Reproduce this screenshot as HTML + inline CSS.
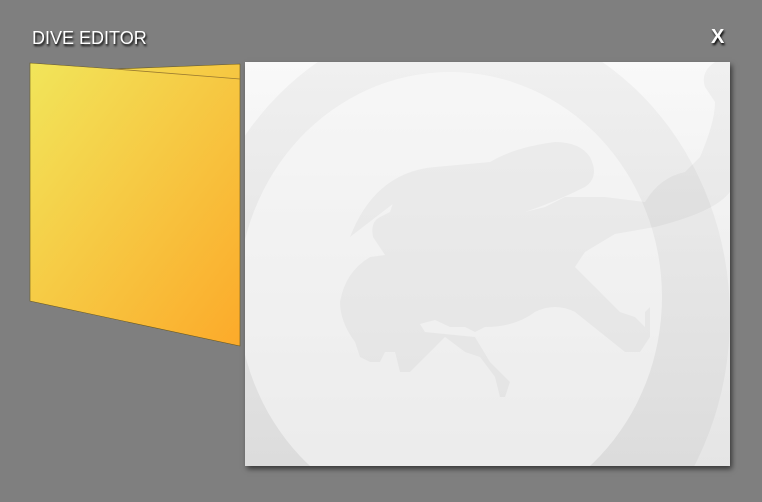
<!DOCTYPE html>
<html><head><style>
html,body{margin:0;padding:0;width:762px;height:502px;overflow:hidden;}
body{background:#7f7f7f;position:relative;font-family:"Liberation Sans",sans-serif;}
.t{position:absolute;left:32px;top:28px;color:#fff;font-size:18px;text-shadow:1px 2px 2px #000;}
.x{position:absolute;left:711px;top:26px;color:#fff;font-size:20px;font-weight:bold;text-shadow:1px 2px 2px #000;}
.p{position:absolute;left:245px;top:62px;width:485px;height:404px;box-shadow:2px 3px 5px rgba(0,0,0,.55);overflow:hidden;background:linear-gradient(#f9f9f9,#e5e5e5);}
svg{display:block}
</style></head><body>
<div class="t">DIVE EDITOR</div>
<div class="x">X</div>
<svg style="position:absolute;left:0;top:0" width="762" height="502">
<defs><linearGradient id="g" x1="0" y1="0" x2="1" y2="1"><stop offset="0" stop-color="#f1e55a"/><stop offset="1" stop-color="#fcaa2a"/></linearGradient></defs>
<polygon points="30,63 115,69 240,64 240,346 30,301" fill="url(#g)" stroke="#6a5a20" stroke-width="0.6"/>
<line x1="115" y1="69" x2="240" y2="79" stroke="#9a7a30" stroke-width="0.8"/>
</svg>
<div class="p">
<svg width="485" height="404" style="position:absolute;left:0;top:0">
<ellipse cx="215" cy="255" rx="270" ry="300" fill="#000" opacity="0.035"/>
<ellipse cx="205" cy="235" rx="212" ry="225" fill="#fff" opacity="0.45"/>
<path d="M105 175 Q130 110 190 105 L245 100 Q270 85 310 80 Q335 80 345 95 Q355 115 340 125 Q310 140 280 150 L300 145 L320 135 L360 135 L400 140 Q415 115 440 110 L455 95 Q470 60 470 40 L460 25 Q455 10 470 0 L485 0 L485 130 Q470 150 410 165 L370 172 L340 190 L330 205 L375 250 L390 255 L400 265 L400 250 L405 245 L405 275 L395 290 L380 290 L330 250 Q310 240 290 250 Q270 265 240 265 L230 270 L220 265 L205 265 L190 258 L175 262 L180 270 L230 275 L245 300 L265 320 L260 335 L255 335 L250 315 L235 295 L220 290 L200 275 L185 290 L165 310 L155 310 L150 290 L140 290 L135 300 L125 300 L115 295 L110 280 Q95 260 95 240 Q100 210 125 195 L140 193 L128 175 Q125 160 135 155 L145 150 L150 135 L170 125 Z" fill="#000" opacity="0.035"/>
</svg>
</div>
</body></html>
